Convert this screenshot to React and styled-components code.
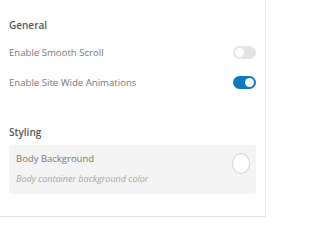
import React, { useState } from "react";
import styled, { createGlobalStyle } from "styled-components";

const Global = createGlobalStyle`
  body {
    margin: 0;
    background: #fff;
    font-family: "Open Sans", "Noto Sans", sans-serif;
  }
`;

const Panel = styled.div`
  box-sizing: border-box;
  width: 266px;
  height: 217px;
  border-right: 1px solid #e2e2e2;
  border-bottom: 1px solid #e2e2e2;
  padding: 17px 9px 0 9px;
`;

const SectionTitle = styled.div`
  font-size: 10px;
  font-weight: 600;
  line-height: 16px;
  color: #555;
  margin-top: ${(p) => p.$top || 0}px;
`;

const Rows = styled.div`
  margin-top: 4px;
`;

const Row = styled.div`
  display: flex;
  align-items: center;
  justify-content: space-between;
  height: 30px;
`;

const RowLabel = styled.span`
  font-size: 9.6px;
  color: #777;
`;

const Track = styled.button`
  position: relative;
  width: 23px;
  height: 13px;
  border: none;
  padding: 0;
  border-radius: 7px;
  background: ${(p) => (p.$on ? "#0b78c2" : "#e4e4e4")};
  cursor: pointer;
  &::after {
    content: "";
    position: absolute;
    top: 2px;
    left: ${(p) => (p.$on ? "12px" : "2px")};
    width: 9px;
    height: 9px;
    border-radius: 50%;
    background: #fff;
  }
`;

const Card = styled.div`
  margin-top: 5px;
  height: 49px;
  box-sizing: border-box;
  background: #f4f4f4;
  border-radius: 3px;
  display: flex;
  align-items: flex-start;
  justify-content: space-between;
  padding: 7px 6px 0 7px;
`;

const CardText = styled.div`
  display: flex;
  flex-direction: column;
  gap: 7px;
`;

const CardTitle = styled.span`
  font-size: 9.5px;
  color: #777;
  line-height: 14px;
`;

const CardHint = styled.span`
  font-size: 9px;
  font-style: italic;
  color: #a5a5a5;
  line-height: 12px;
`;

const Swatch = styled.div`
  box-sizing: border-box;
  width: 18px;
  height: 21px;
  margin-top: 1px;
  border: 1.5px solid #d4d4d4;
  border-radius: 50%;
  background: #fff;
`;

function Toggle({ initial }) {
  const [on, setOn] = useState(initial);
  return <Track $on={on} onClick={() => setOn(!on)} />;
}

export default function App() {
  return (
    <>
      <Global />
      <Panel>
        <SectionTitle>General</SectionTitle>
        <Rows>
          <Row>
            <RowLabel>Enable Smooth Scroll</RowLabel>
            <Toggle initial={false} />
          </Row>
          <Row>
            <RowLabel>Enable Site Wide Animations</RowLabel>
            <Toggle initial={true} />
          </Row>
        </Rows>
        <SectionTitle $top={27}>Styling</SectionTitle>
        <Card>
          <CardText>
            <CardTitle>Body Background</CardTitle>
            <CardHint>Body container background color</CardHint>
          </CardText>
          <Swatch />
        </Card>
      </Panel>
    </>
  );
}
